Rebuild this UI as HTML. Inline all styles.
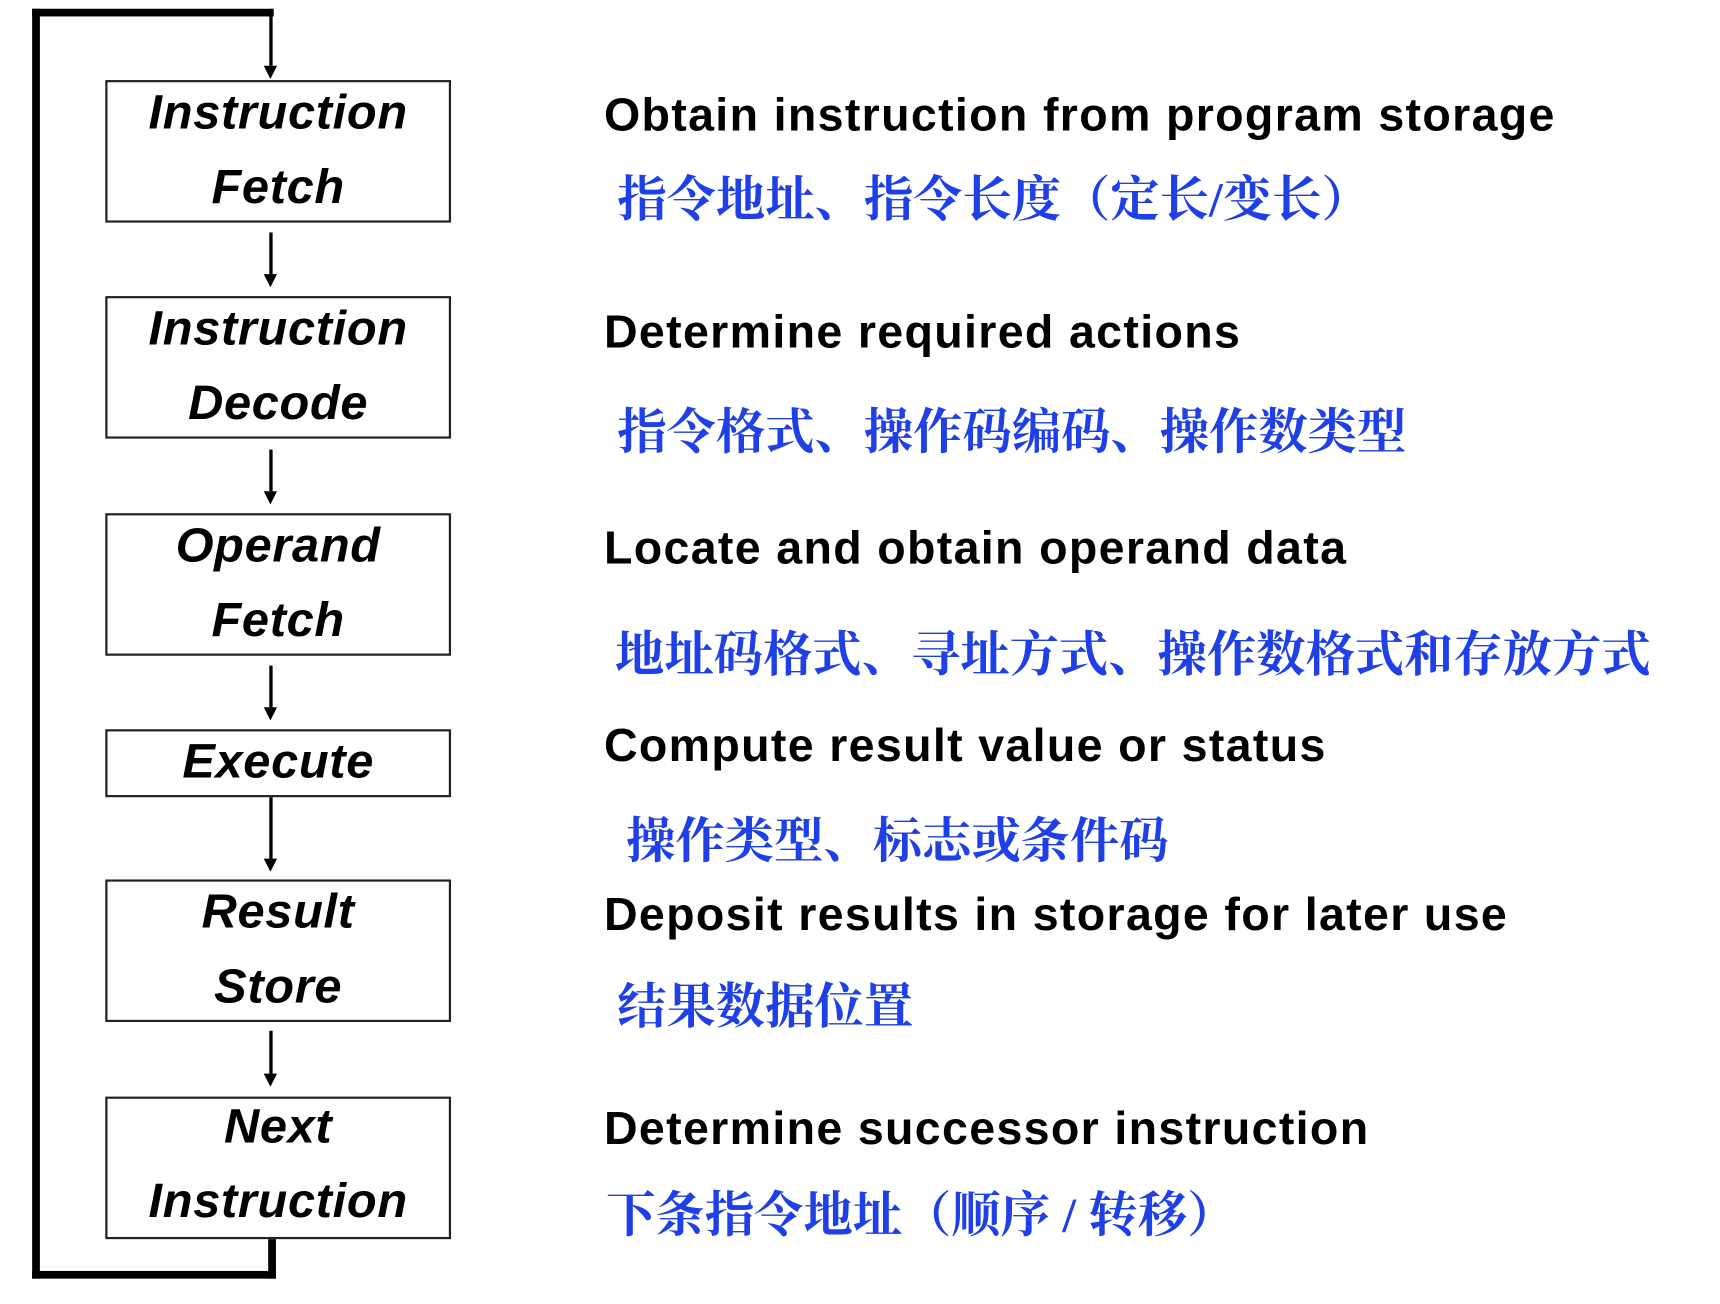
<!DOCTYPE html>
<html><head><meta charset="utf-8"><style>
html,body{margin:0;padding:0;background:#fff;width:1720px;height:1304px;overflow:hidden}
#w{position:absolute;left:0;top:0;width:1552px;height:1189px;transform-origin:0 0;transform:scale(1.1082,1.0966)}
.ln{position:absolute;background:#000}
.box{position:absolute;left:95px;width:312px;border:2px solid #222;box-sizing:border-box;font:italic bold 44px "Liberation Sans",sans-serif;letter-spacing:0.6px;text-align:center;color:#000}
.box div{position:absolute;left:0;right:0;line-height:46px}
.en{position:absolute;left:545px;font:bold 42px "Liberation Sans",sans-serif;letter-spacing:1.2px;color:#000;white-space:nowrap;line-height:44px}
.cn{position:absolute;font:bold 44.5px "Liberation Serif","Noto Serif CJK SC",serif;color:#1f40e6;white-space:nowrap;line-height:48px}
.ar{position:absolute;width:0;height:0;border-left:6px solid transparent;border-right:6px solid transparent;border-top:12px solid #000}
</style></head><body><div id="w">
<div class="ln" style="left:29px;top:8px;width:7px;height:1158px"></div>
<div class="ln" style="left:29px;top:8px;width:218px;height:7px"></div>
<div class="ln" style="left:243px;top:8px;width:3px;height:52px"></div><div class="ar" style="left:238px;top:60px"></div>
<div class="ln" style="left:29px;top:1159px;width:220px;height:7px"></div>
<div class="ln" style="left:242px;top:1130px;width:7px;height:36px"></div>

<div class="box" style="top:73px;height:130px"><div style="top:5px">Instruction</div><div style="top:73px">Fetch</div></div>
<div class="ln" style="left:243px;top:212px;width:3px;height:38px"></div><div class="ar" style="left:238px;top:250px"></div>
<div class="box" style="top:270px;height:130px"><div style="top:5px">Instruction</div><div style="top:73px">Decode</div></div>
<div class="ln" style="left:243px;top:410px;width:3px;height:38px"></div><div class="ar" style="left:238px;top:448px"></div>
<div class="box" style="top:468px;height:130px"><div style="top:5px">Operand</div><div style="top:73px">Fetch</div></div>
<div class="ln" style="left:243px;top:607px;width:3px;height:38px"></div><div class="ar" style="left:238px;top:645px"></div>
<div class="box" style="top:665px;height:62px"><div style="top:5px">Execute</div></div>
<div class="ln" style="left:243px;top:727px;width:3px;height:58px"></div><div class="ar" style="left:238px;top:783px"></div>
<div class="box" style="top:802px;height:130px"><div style="top:5px">Result</div><div style="top:73px">Store</div></div>
<div class="ln" style="left:243px;top:940px;width:3px;height:40px"></div><div class="ar" style="left:238px;top:979px"></div>
<div class="box" style="top:1000px;height:130px"><div style="top:3px">Next</div><div style="top:71px">Instruction</div></div>

<div class="en" style="top:83px">Obtain instruction from program storage</div>
<div class="cn" style="left:557px;top:158px">指令地址、指令长度（定长/变长）</div>
<div class="en" style="top:281px">Determine required actions</div>
<div class="cn" style="left:557px;top:370px">指令格式、操作码编码、操作数类型</div>
<div class="en" style="top:478px">Locate and obtain operand data</div>
<div class="cn" style="left:555px;top:573px">地址码格式、寻址方式、操作数格式和存放方式</div>
<div class="en" style="top:658px">Compute result value or status</div>
<div class="cn" style="left:565px;top:743px">操作类型、标志或条件码</div>
<div class="en" style="top:812px">Deposit results in storage for later use</div>
<div class="cn" style="left:557px;top:894px">结果数据位置</div>
<div class="en" style="top:1007px">Determine successor instruction</div>
<div class="cn" style="left:547px;top:1084px">下条指令地址（顺序 / 转移）</div>
</div></body></html>
